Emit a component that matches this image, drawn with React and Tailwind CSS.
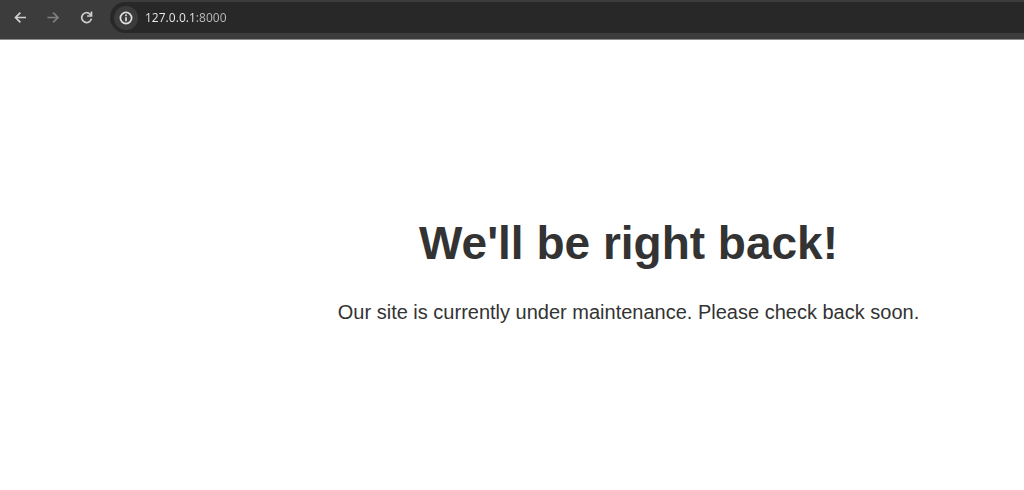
import React, { useState } from "react";

function NavButton({ label, disabled, children }) {
  return (
    <button
      type="button"
      aria-label={label}
      disabled={disabled}
      className="flex size-6 items-center justify-center rounded-full text-[#d0d0d0] disabled:text-[#808080]"
    >
      {children}
    </button>
  );
}

function Icon({ children }) {
  return (
    <svg
      viewBox="0 0 16 16"
      className="size-4"
      fill="none"
      stroke="currentColor"
      strokeWidth="1.7"
      aria-hidden="true"
    >
      {children}
    </svg>
  );
}

function BrowserBar() {
  const [url, setUrl] = useState("127.0.0.1:8000");

  return (
    <header className="flex h-10 items-start border-b border-[#8c8c8c] bg-[#3c3c3c] pt-0.5 pl-2">
      <nav className="flex h-8 items-center gap-[9px]">
        <NavButton label="Back">
          <Icon>
            <path d="M14 7.5H4M8.4 2.6L3.5 7.5l4.9 4.9" />
          </Icon>
        </NavButton>
        <NavButton label="Forward" disabled>
          <Icon>
            <path d="M2.5 7.5h10M8.1 2.6L13 7.5l-4.9 4.9" />
          </Icon>
        </NavButton>
        <NavButton label="Reload">
          <Icon>
            <path d="M13.4 8.6A4.9 4.9 0 1 1 12 4.1L13 5.2" />
            <path d="M13.5 1.6V6H9.1" />
          </Icon>
        </NavButton>
      </nav>

      <div className="ml-3 flex h-[31px] flex-1 items-center rounded-l-full bg-[#282828] pl-1">
        <button
          type="button"
          aria-label="View site information"
          className="flex size-6 items-center justify-center rounded-full bg-[#3c3c3c] text-[#e0e0e0]"
        >
          <Icon>
            <circle cx="8" cy="8" r="5.6" />
            <path d="M8 7.2v4M8 4.6v1.6" />
          </Icon>
        </button>
        {/* host is brighter than the port */}
        <input
          type="text"
          aria-label="Address"
          value={url}
          onChange={(e) => setUrl(e.target.value)}
          className="ml-[7px] h-6 min-w-0 flex-1 bg-linear-to-r from-[#e8e8e8] from-[50px] to-[#b8b8b8] to-[50px] bg-clip-text font-['Noto_Sans',sans-serif] text-xs text-transparent caret-white outline-none"
        />
      </div>
    </header>
  );
}

function App() {
  return (
    <div className="flex min-h-screen flex-col bg-white">
      <BrowserBar />
      <main className="flex flex-1 flex-col items-center justify-center gap-[29px] pt-2 pl-[233px] text-center font-['Liberation_Sans',Arial,sans-serif] text-[#333333]">
        <h1 className="text-[46px] leading-[56px] font-bold">We'll be right back!</h1>
        <p className="text-[20px] leading-6">
          Our site is currently under maintenance. Please check back soon.
        </p>
      </main>
    </div>
  );
}

export default App;
